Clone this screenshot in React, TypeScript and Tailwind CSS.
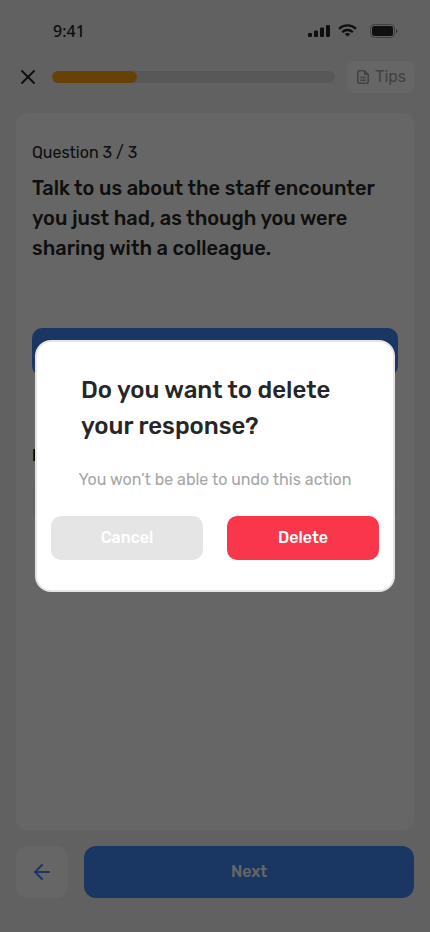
import { ArrowLeft, X } from "lucide-react";

function StatusBar() {
  return (
    <div className="flex h-[61px] items-center justify-between pl-[53px] pr-[31px]">
      <span className="font-['Noto_Sans',sans-serif] text-base leading-6 font-medium text-[#262626]">9:41</span>
      <div className="flex items-center gap-2 text-[#262626]">
        <svg width="22" height="12" viewBox="0 0 22 12" fill="currentColor" aria-hidden="true">
          <rect x="0" y="8" width="4" height="4" rx="1" />
          <rect x="6" y="5.500" width="4" height="6.500" rx="1" />
          <rect x="12" y="2.500" width="4" height="9.500" rx="1" />
          <rect x="18" y="0" width="4" height="12" rx="1" />
        </svg>
        <svg width="19" height="13" viewBox="0 0 19 13" fill="none" stroke="currentColor" strokeWidth="2.3" aria-hidden="true">
          <path d="M1 4.8C5.8 0.2 13.2 0.2 18 4.8" />
          <path d="M4.2 8.1C7.2 5.3 11.8 5.3 14.8 8.1" />
          <path d="M9.5 12.6L6.7 9.9C8.3 8.6 10.7 8.6 12.3 9.9Z" fill="currentColor" stroke="none" />
        </svg>
        <svg className="ml-1" width="30" height="14" viewBox="0 0 30 14" fill="none" aria-hidden="true">
          <rect x="1.5" y="0.5" width="24" height="13" rx="4" stroke="currentColor" strokeOpacity="0.4" />
          <rect x="3" y="2" width="21" height="10" rx="2.5" fill="currentColor" />
          <path d="M27 5v4c1-.4 1.500-1.100 1.500-2S28 5.400 27 5z" fill="currentColor" fillOpacity="0.5" />
        </svg>
      </div>
    </div>
  );
}

function DocumentIcon() {
  return (
    <svg width="12" height="14" viewBox="0 0 12 14" fill="none" stroke="currentColor" strokeWidth="1.6" strokeLinejoin="round" aria-hidden="true">
      <path d="M7.500 0.800H2.200C1.300 0.800 0.800 1.300 0.800 2.200v9.600c0 .9.500 1.400 1.400 1.400h7.600c.9 0 1.400-.5 1.400-1.400V4.500Z" />
      <path d="M7.500 0.800v3.700h3.700Z" fill="currentColor" strokeWidth="1" />
      <path d="M3.200 7.500h5.600M3.200 10.200h5.600" strokeWidth="1.400" />
    </svg>
  );
}

function ConfirmDialog() {
  return (
    <div className="fixed inset-0 flex items-center justify-center bg-black/60 px-[35px]">
      <div
        role="dialog"
        aria-modal="true"
        aria-labelledby="dialog-title"
        className="w-full max-w-[360px] rounded-2xl border-2 border-[#e5e5e5] bg-white px-[14px] py-[30px]"
      >
        <h2 id="dialog-title" className="mx-auto max-w-[268px] text-2xl leading-9 font-medium text-[#262626]">
          Do you want to delete your response?
        </h2>
        <p className="mt-6 text-center text-base leading-6 text-[#a6a6a6]">You won’t be able to undo this action</p>
        <div className="mt-6 flex gap-6">
          <button type="button" className="h-11 flex-1 rounded-[10px] bg-[#e5e5e5] text-base font-medium text-white">
            Cancel
          </button>
          <button type="button" className="h-11 flex-1 rounded-[10px] bg-[#fa364a] text-base font-medium text-white">
            Delete
          </button>
        </div>
      </div>
    </div>
  );
}

export default function App() {
  return (
    <div className="flex min-h-screen flex-col bg-[#f3f3f3] font-[Rubik,Roboto,sans-serif] text-[#262626]">
      <StatusBar />
      <header className="flex items-center gap-3 px-4">
        <button type="button" aria-label="Close" className="flex size-6 items-center justify-center">
          <X size={24} strokeWidth={2} />
        </button>
        <div
          role="progressbar"
          aria-label="Progress"
          aria-valuenow={30}
          aria-valuemin={0}
          aria-valuemax={100}
          className="h-3 flex-1 rounded-full bg-[#d9dcde]"
        >
          <div className="h-full w-[30%] rounded-full bg-[#ffa516]" />
        </div>
        <button type="button" className="flex h-8 items-center gap-[6px] rounded-lg bg-white pr-2 pl-[10px] text-base text-[#a6a6a6]">
          <DocumentIcon />
          Tips
        </button>
      </header>

      <main className="mx-4 mt-5 flex flex-1 flex-col rounded-xl bg-white px-4 pt-7">
        <p className="text-base leading-6">Question 3 / 3</p>
        <h1 className="mt-2 text-xl leading-[30px] font-medium">
          Talk to us about the staff encounter you just had, as though you were sharing with a colleague.
        </h1>
        <button type="button" aria-label="Record" className="mt-[65px] h-12 shrink-0 rounded-[10px] bg-[#418af8]" />
        <div className="mt-[68px] leading-6 font-medium text-black">R</div>
        <div className="mt-3 h-10 rounded-[10px] bg-[#f8f8f8]" />
      </main>

      <footer className="flex gap-4 px-4 pt-4 pb-[34px]">
        <button type="button" aria-label="Back" className="flex size-13 items-center justify-center rounded-xl bg-white text-[#418af8]">
          <ArrowLeft size={24} strokeWidth={2} />
        </button>
        <button type="button" className="h-13 flex-1 rounded-xl bg-[#418af8] text-base font-medium text-white">
          Next
        </button>
      </footer>

      <ConfirmDialog />
    </div>
  );
}
